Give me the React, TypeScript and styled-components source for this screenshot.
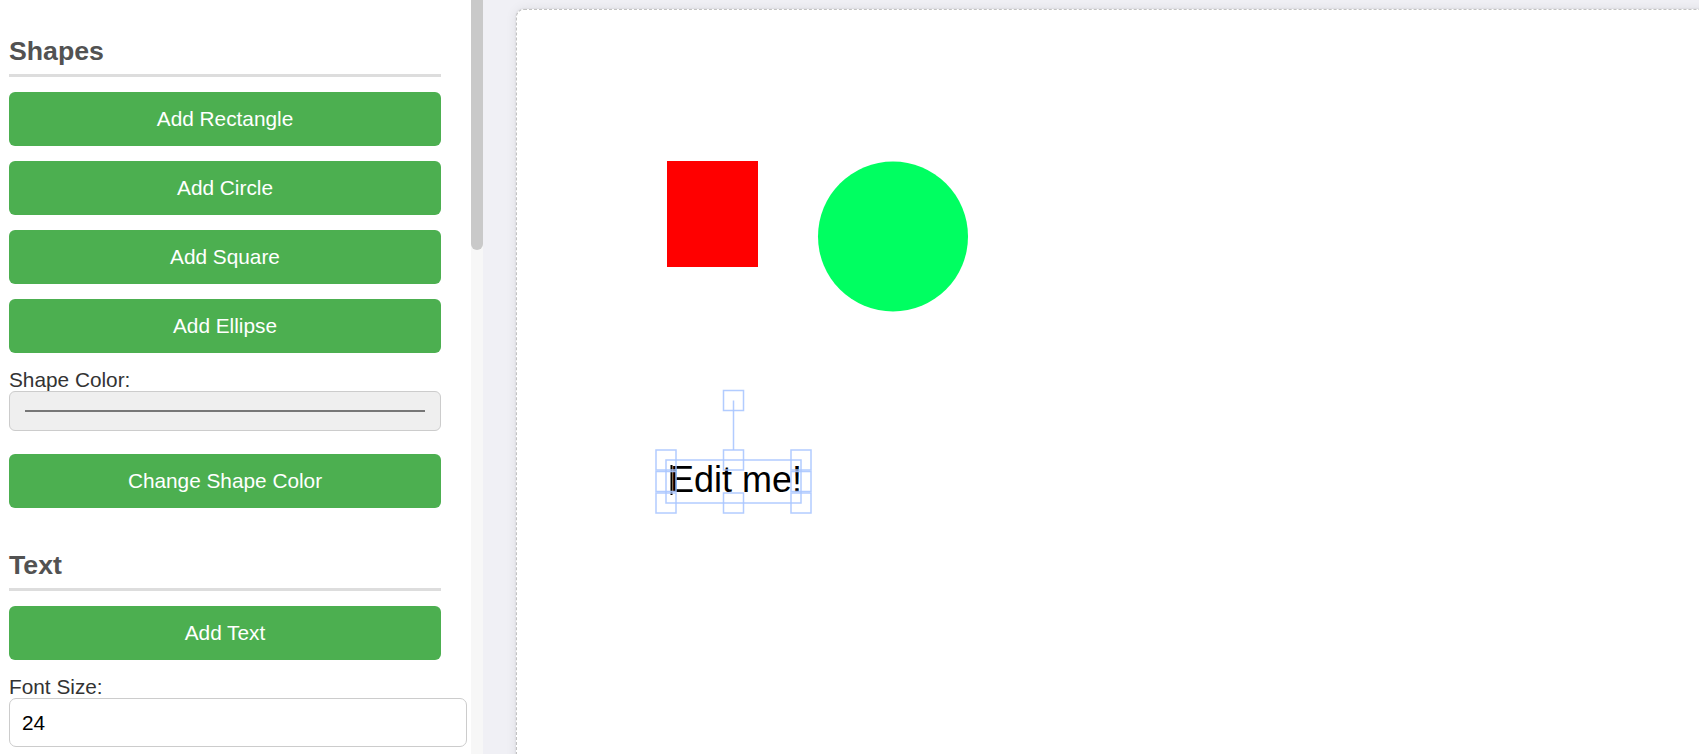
import React from "react";
import styled, { createGlobalStyle } from "styled-components";

const GlobalStyle = createGlobalStyle`
  html, body { margin: 0; padding: 0; height: 100%; overflow: hidden; }
  body { font-family: "Liberation Sans", Arial, sans-serif; background: #ffffff; }
  #root { height: 100%; }
`;

const Layout = styled.div`
  display: flex;
  height: 100vh;
  width: 100vw;
  overflow: hidden;
`;

const Sidebar = styled.aside`
  display: flex;
  width: 483px;
  flex-shrink: 0;
  height: 100%;
  background: #ffffff;
`;

const SidebarContent = styled.div`
  box-sizing: border-box;
  width: 471px;
  height: 100%;
  overflow: hidden;
  padding: 36px 30px 0 9px;
`;

const ScrollTrack = styled.div`
  width: 12px;
  height: 100%;
  background: #f7f7f7;
`;

const ScrollThumb = styled.div`
  width: 12px;
  height: 250px;
  background: #c9c9c9;
  border-radius: 0 0 6px 6px;
`;

const Section = styled.section<{ $gap?: number }>`
  margin-top: ${(p) => p.$gap ?? 0}px;
`;

const Heading = styled.h3`
  margin: 0 0 15px;
  padding-bottom: 8px;
  border-bottom: 3px solid #dddddd;
  font-size: 26.7px;
  line-height: 30px;
  font-weight: 700;
  color: #525252;
`;

const ActionButton = styled.button<{ $after?: number }>`
  display: block;
  box-sizing: border-box;
  width: 100%;
  height: 54px;
  margin: 0 0 ${(p) => p.$after ?? 15}px;
  border: none;
  border-radius: 6px;
  background: #4caf50;
  color: #ffffff;
  font-family: "Liberation Sans", Arial, sans-serif;
  font-size: 20.8px;
  cursor: pointer;
`;

const FieldLabel = styled.label`
  display: block;
  margin-top: 1px;
  font-size: 20.8px;
  line-height: 23px;
  color: #333333;
`;

const ColorField = styled.div`
  box-sizing: border-box;
  width: 100%;
  height: 40px;
  margin-bottom: 23px;
  border: 1px solid #cccccc;
  border-radius: 6px;
  background: #efefef;
  display: flex;
  align-items: center;
  padding: 0 15px;
`;

const ColorSwatch = styled.div<{ $color: string }>`
  flex: 1;
  height: 2px;
  background: ${(p) => p.$color};
`;

const NumberInput = styled.input`
  box-sizing: border-box;
  display: block;
  width: 458px;
  height: 49px;
  margin: 0;
  padding: 0 12px;
  border: 1px solid #cccccc;
  border-radius: 7px;
  background: #ffffff;
  font-family: "Liberation Sans", Arial, sans-serif;
  font-size: 20.8px;
  color: #000000;
  outline: none;
`;

const Main = styled.main`
  flex: 1;
  min-width: 0;
  background: #f0f0f5;
  overflow: hidden;
  padding: 9px 0 0 33px;
  box-sizing: border-box;
`;

const CanvasFrame = styled.div`
  position: relative;
  width: 1300px;
  height: 900px;
  background: #ffffff;
  border: 1px dashed #c2c2c2;
  border-radius: 8px;
  box-shadow: 0 0 12px rgba(0, 0, 0, 0.08), 0 0 2px rgba(0, 0, 0, 0.12);
`;

const Drawing = styled.svg`
  position: absolute;
  left: 0;
  top: 0;
`;

const CTRL = "rgba(170, 198, 255, 0.9)";

function Handle({ cx, cy }: { cx: number; cy: number }) {
  return (
    <rect
      x={cx - 10}
      y={cy - 10}
      width={20}
      height={20}
      fill="none"
      stroke={CTRL}
      strokeWidth={1.5}
    />
  );
}

function CanvasScene() {
  const l = 149;
  const r = 284;
  const t = 450;
  const b = 493;
  const mx = (l + r) / 2;
  const my = (t + b) / 2;
  return (
    <Drawing width={1300} height={900}>
      <rect x={150} y={151} width={91} height={106} fill="#ff0000" />
      <circle cx={376} cy={226.5} r={75} fill="#00ff61" />
      <text
        x={153}
        y={482}
        fontFamily="'Liberation Sans', Arial, sans-serif"
        fontSize={36}
        fill="#000000"
      >
        Edit me!
      </text>
      <rect x={153.5} y={455} width={2} height={30} fill="#000000" />
      <rect x={l} y={t} width={r - l} height={b - t} fill="none" stroke={CTRL} strokeWidth={1.5} />
      <line x1={mx} y1={390.5} x2={mx} y2={t - 10} stroke={CTRL} strokeWidth={1.5} />
      <Handle cx={mx} cy={390.5} />
      <Handle cx={l} cy={t} />
      <Handle cx={mx} cy={t} />
      <Handle cx={r} cy={t} />
      <Handle cx={l} cy={my} />
      <Handle cx={r} cy={my} />
      <Handle cx={l} cy={b} />
      <Handle cx={mx} cy={b} />
      <Handle cx={r} cy={b} />
    </Drawing>
  );
}

export default function App() {
  return (
    <>
      <GlobalStyle />
      <Layout>
        <Sidebar>
          <SidebarContent>
            <Section>
              <Heading>Shapes</Heading>
              <ActionButton>Add Rectangle</ActionButton>
              <ActionButton>Add Circle</ActionButton>
              <ActionButton>Add Square</ActionButton>
              <ActionButton>Add Ellipse</ActionButton>
              <FieldLabel>Shape Color:</FieldLabel>
              <ColorField>
                <ColorSwatch $color="#777777" />
              </ColorField>
              <ActionButton $after={0}>Change Shape Color</ActionButton>
            </Section>

            <Section $gap={42}>
              <Heading>Text</Heading>
              <ActionButton>Add Text</ActionButton>
              <FieldLabel>Font Size:</FieldLabel>
              <NumberInput type="number" defaultValue={24} />
            </Section>
          </SidebarContent>
          <ScrollTrack>
            <ScrollThumb />
          </ScrollTrack>
        </Sidebar>
        <Main>
          <CanvasFrame>
            <CanvasScene />
          </CanvasFrame>
        </Main>
      </Layout>
    </>
  );
}
